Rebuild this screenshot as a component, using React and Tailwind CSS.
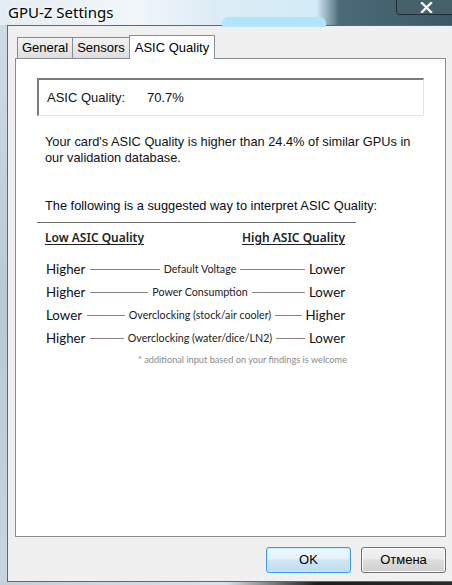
import React from "react";

const rows = [
  ["Higher", "Default Voltage", "Lower"],
  ["Higher", "Power Consumption", "Lower"],
  ["Lower", "Overclocking (stock/air cooler)", "Higher"],
  ["Higher", "Overclocking (water/dice/LN2)", "Lower"],
];

const Row = ({ left, label, right }) => (
  <div className="grid grid-cols-[1fr_auto_1fr] items-center h-[23px] w-[308px]">
    <div className="flex items-center gap-[5px] pr-[4px]">
      <span className="text-[13.3px] text-[#111]">{left}</span>
      <span className="flex-1 h-px bg-[#8e8184]" />
    </div>
    <span className="text-[10.7px] text-[#222]">{label}</span>
    <div className="flex items-center gap-[4px] pl-[4px] pr-[9px]">
      <span className="flex-1 h-px bg-[#8e8184]" />
      <span className="text-[13.3px] text-[#111]">{right}</span>
    </div>
  </div>
);

const App = () => {
  return (
    <div
      className="w-[452px] h-[585px] overflow-hidden flex flex-col bg-[linear-gradient(90deg,#dfe9f0_0%,#e9f2f7_40%,#d7ecf7_70%,#445f6c_76%,#3a5462_100%)]"
      style={{ fontFamily: "'Liberation Sans', Arial, sans-serif" }}
    >
      {/* Title bar */}
      <div className="relative h-[25px] shrink-0 bg-[linear-gradient(90deg,#e4edf3_0%,#f1f6fa_30%,#dcecf6_48%,#d3ecf8_70%,#4b6b79_75%,#3b5866_100%)]">
        <div className="absolute left-[222px] top-[17px] w-[104px] h-[10px] rounded-t-[6px] bg-[#b4e4f8]" />
        <span
          className="absolute left-[8px] top-[1px] text-[15px] text-black [text-shadow:0_0_6px_#ffffff,0_0_3px_#ffffff]"
          style={{ fontFamily: "'Noto Sans', 'Open Sans', sans-serif" }}
        >
          GPU-Z Settings
        </span>
        <div className="absolute right-[-4px] top-[-6px] w-[60px] h-[21px] rounded-[4px] border border-[#1f2f38] bg-[#46606c] flex items-end justify-center pb-[1px]">
          <svg width="13" height="11" viewBox="0 0 13 11">
            <path d="M2 1 L11 10 M11 1 L2 10" stroke="#f4f6f7" strokeWidth="2.4" strokeLinecap="square" />
          </svg>
        </div>
      </div>

      {/* Body */}
      <div className="flex h-[557px] shrink-0">
        <div className="w-[7px] bg-[linear-gradient(180deg,#cfdbe4,#b9c9d4_50%,#c7d5de)]" />
        <div className="flex-1 flex flex-col bg-[#f0f0f0] border-l border-t border-b border-[#5d6870] pl-[7px] pr-[6px] pt-[9px] pb-[8px]">
          {/* Tabs */}
          <div className="flex items-end h-[23px] pl-[2px] relative z-10 text-[13px] text-black">
            <div className="w-[56px] h-[21px] border border-b-0 border-[#898c95] bg-[linear-gradient(180deg,#f2f2f2,#dedede)] flex items-center justify-center">
              General
            </div>
            <div className="w-[57px] h-[21px] border border-b-0 border-l-0 border-[#898c95] bg-[linear-gradient(180deg,#f2f2f2,#dedede)] flex items-center justify-center">
              Sensors
            </div>
            <div className="w-[86px] h-[24px] -mb-px border border-b-0 border-[#898c95] bg-white flex items-start justify-center pt-[2px] -ml-px">
              ASIC Quality
            </div>
          </div>

          {/* Panel */}
          <div className="h-[479px] w-[431px] border border-[#898c95] bg-white pl-[21px] pt-[19px]">
            <div className="w-[387px] h-[38px] border-t-2 border-l-2 border-t-[#7a7a7a] border-l-[#7a7a7a] border-r border-b border-r-[#e3e3e3] border-b-[#e3e3e3] flex items-center text-[13px] text-[#111]">
              <span className="ml-[8px] w-[100px]">ASIC Quality:</span>
              <span>70.7%</span>
            </div>

            <p className="mt-[18px] ml-[8px] w-[380px] text-[12.8px] leading-[16px] text-[#111]">
              Your card's ASIC Quality is higher than 24.4% of similar GPUs in our validation database.
            </p>

            <p className="mt-[32px] ml-[8px] text-[12.8px] leading-[16px] text-[#0a0a20]">
              The following is a suggested way to interpret ASIC Quality:
            </p>
            <div className="mt-[8px] w-[319px] h-px bg-[#6a6a6a]" />

            <div style={{ fontFamily: "Lato, 'Noto Sans', sans-serif" }}>
              <div
                className="mt-[7px] ml-[8px] w-[300px] flex justify-between text-[12px] leading-[16px] font-semibold underline underline-offset-2 text-[#222]"
                style={{ fontFamily: "'Noto Sans', 'Open Sans', sans-serif" }}
              >
                <span>Low ASIC Quality</span>
                <span>High ASIC Quality</span>
              </div>

              <div className="mt-[12px] ml-[9px] flex flex-col">
                {rows.map(([l, m, r]) => (
                  <Row key={m} left={l} label={m} right={r} />
                ))}
              </div>

              <div className="mt-[3px] w-[310px] text-right text-[9.2px] leading-[14px] text-[#8a8a8a]">
                * additional input based on your findings is welcome
              </div>
            </div>
          </div>

          {/* Buttons */}
          <div className="mt-[10px] flex justify-end gap-[10px] text-[13px] text-black">
            <button className="w-[85px] h-[26px] rounded-[3px] border border-[#3c9be0] bg-[linear-gradient(180deg,#eef7fd_0%,#e3f1fa_45%,#cfe6f5_50%,#bddcf0_100%)] shadow-[inset_0_0_0_1px_#c8ecff]">
              OK
            </button>
            <button className="w-[85px] h-[26px] rounded-[3px] border border-[#707070] bg-[linear-gradient(180deg,#f2f2f2_0%,#ebebeb_45%,#dddddd_50%,#cfcfcf_100%)] shadow-[inset_0_0_0_1px_#fcfcfc]">
              Отмена
            </button>
          </div>
        </div>
      </div>

      <div className="h-[3px] bg-[linear-gradient(90deg,#c2d0da_0%,#d6e3ec_50%,#1d1d1d_70%,#2a2a2a_100%)]" />
    </div>
  );
};

export default App;
